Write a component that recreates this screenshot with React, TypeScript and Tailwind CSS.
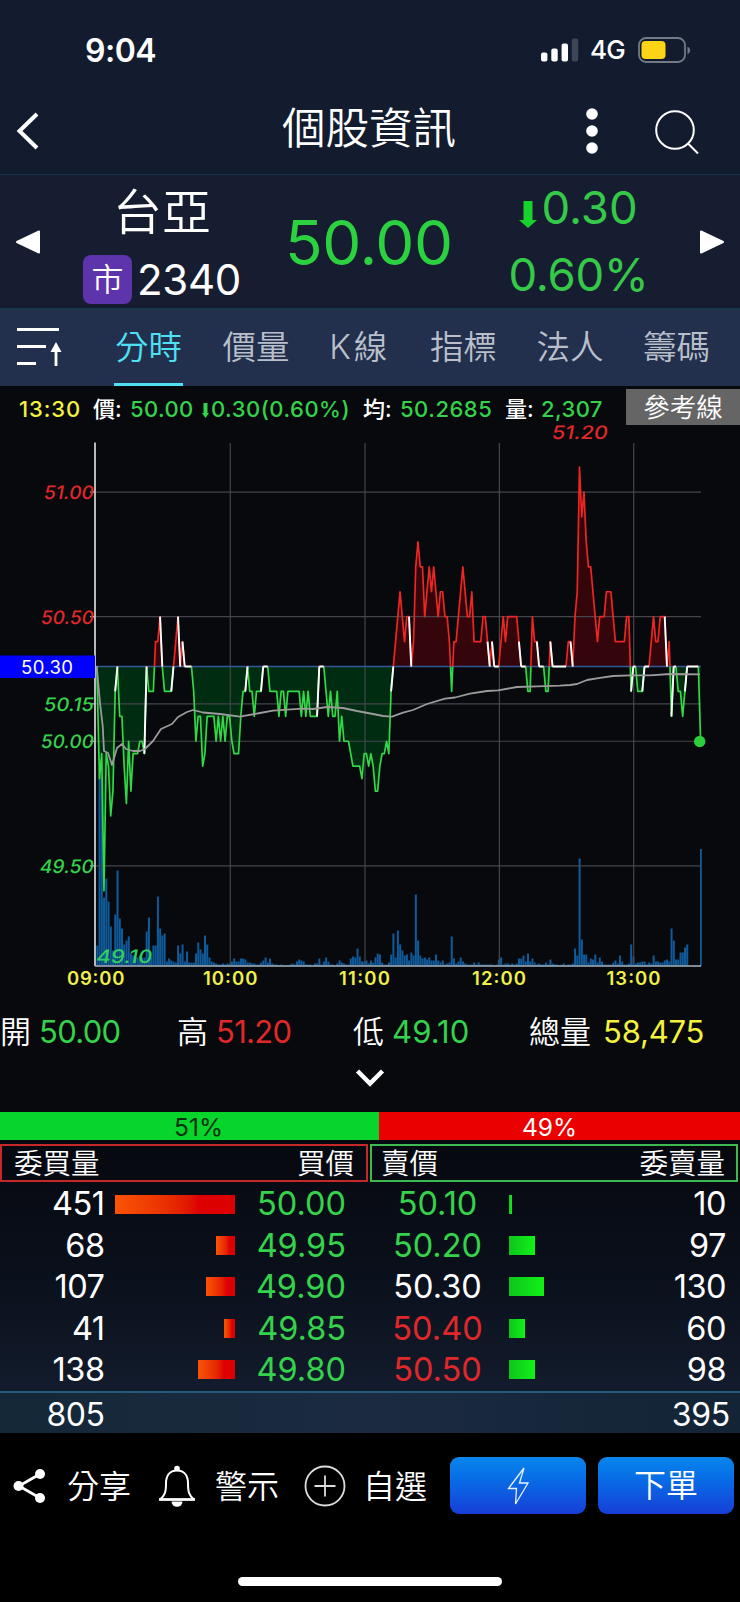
import type { ReactNode } from 'react';
import { clsx } from 'clsx';

const REF = 50.3;

// [minute since 09:00, price], only where the line bends
const PRICES: [number, number][] = [
  [0.8, 50.3], [2, 49.85], [3, 49.95], [4, 49.4], [5, 49.95], [6, 49.9], [7, 49.7], [8, 49.8], [9, 50.2], [10, 50.3],
  [11, 50.1], [12, 50.1], [13, 49.9], [14, 49.75], [15, 50], [16, 49.8], [17, 49.95], [19, 49.95], [20, 50], [21, 50],
  [22, 49.95], [23, 50.3], [24, 50.2], [26, 50.2], [27, 50.4], [28, 50.4], [29, 50.5], [30, 50.3], [31, 50.2], [34, 50.2],
  [35, 50.3], [36, 50.4], [37, 50.5], [38, 50.3], [39, 50.4], [40, 50.3], [43, 50.3], [44, 50.2], [45, 50], [46, 50.1],
  [47, 50.1], [48, 49.9], [49, 49.95], [50, 50.1], [53, 50.1], [54, 50], [55, 50.1], [56, 50], [57, 50.1], [58, 50],
  [59, 50.1], [60, 50.1], [61, 50], [62, 49.95], [64, 49.95], [65, 50.1], [66, 50.2], [67, 50.2], [68, 50.3], [69, 50.2],
  [70, 50.2], [71, 50.1], [72, 50.2], [74, 50.2], [75, 50.3], [77, 50.3], [78, 50.2], [81, 50.2], [82, 50.1], [83, 50.2],
  [84, 50.2], [85, 50.1], [86, 50.2], [91, 50.2], [92, 50.1], [93, 50.2], [94, 50.1], [95, 50.2], [96, 50.1], [99, 50.1],
  [100, 50.3], [102, 50.3], [103, 50.2], [104, 50.1], [105, 50.2], [106, 50.1], [107, 50.1], [108, 50.2], [109, 50], [110, 50.1],
  [111, 50], [113, 50], [114, 49.95], [115, 49.9], [118, 49.9], [119, 49.85], [120, 49.95], [121, 49.95], [122, 49.9], [123, 49.95],
  [124, 49.9], [125, 49.8], [126, 49.8], [127, 49.9], [128, 49.95], [129, 49.95], [130, 50], [131, 49.95], [132, 50.2], [133, 50.3],
  [134, 50.4], [135, 50.5], [136, 50.6], [137, 50.5], [138, 50.4], [139, 50.5], [140, 50.5], [141, 50.3], [142, 50.4], [143, 50.7],
  [144, 50.8], [145, 50.7], [146, 50.7], [147, 50.5], [148, 50.6], [149, 50.7], [150, 50.6], [151, 50.7], [152, 50.6], [153, 50.5],
  [154, 50.6], [155, 50.6], [156, 50.5], [157, 50.5], [158, 50.4], [159, 50.2], [160, 50.4], [161, 50.4], [162, 50.5], [163, 50.6],
  [164, 50.7], [165, 50.6], [166, 50.5], [167, 50.5], [168, 50.6], [169, 50.4], [172, 50.4], [173, 50.5], [174, 50.5], [175, 50.4],
  [176, 50.3], [177, 50.4], [178, 50.3], [180, 50.3], [181, 50.4], [182, 50.5], [183, 50.4], [184, 50.5], [188, 50.5], [189, 50.4],
  [190, 50.3], [192, 50.3], [193, 50.2], [194, 50.2], [195, 50.5], [196, 50.4], [197, 50.4], [198, 50.3], [200, 50.3], [201, 50.2],
  [202, 50.2], [203, 50.4], [204, 50.3], [210, 50.3], [211, 50.4], [212, 50.4], [213, 50.3], [214, 50.5], [215, 50.6], [216, 51.1],
  [217, 50.9], [218, 51], [219, 50.8], [220, 50.7], [221, 50.7], [222, 50.6], [223, 50.5], [224, 50.4], [225, 50.5], [227, 50.5],
  [228, 50.6], [230, 50.6], [231, 50.5], [232, 50.4], [236, 50.4], [237, 50.5], [238, 50.5], [239, 50.2], [240, 50.3], [241, 50.3],
  [242, 50.2], [244, 50.2], [245, 50.3], [247, 50.3], [248, 50.4], [249, 50.5], [250, 50.4], [251, 50.4], [252, 50.5], [254, 50.5],
  [255, 50.3], [256, 50.4], [257, 50.1], [258, 50.3], [259, 50.3], [260, 50.2], [261, 50.2], [262, 50.1], [263, 50.2], [264, 50.3],
  [269, 50.3], [270, 50],
];

const AVERAGE =
  '96.7,236 100,273 102.7,296 104,321 108,323 112,335 117,318 122,314 126,319 133,321 140,321 145,319 153,311 161,299 172,294 178,287 187,282 193,280 203,282.5 220,284 240,286.7 260,283 273,280.7 287,279.7 303,278.7 313,279 327,277 343,278 357,281 373,284 383,286 392,286.7 403,282.7 413,280 427,274 445,268.6 455,267.5 470,263.6 487,261 498,260.4 517,257 537,256.4 560,255.7 570,255 577,254 587,250 600,247.9 613,246 630,245.4 650,245.4 670,244 700,244.3';

// one bar height per minute
const VOLUMES = [
  0, 20, 193, 190, 68, 87, 64, 39, 15, 51, 95, 47, 37, 21, 25, 29, 12, 10, 8, 8, 10, 8, 8, 34, 48, 8, 20, 20, 69, 37,
  30, 32, 4, 7, 5, 4, 3, 20, 12, 21, 4, 14, 3, 3, 3, 12, 23, 16, 12, 30, 21, 8, 4, 3, 2, 1, 1, 2, 1, 2,
  2, 4, 7, 4, 4, 7, 7, 6, 3, 3, 2, 2, 1, 1, 3, 5, 8, 3, 7, 2, 1, 1, 0, 1, 0, 0, 0, 1, 2, 1,
  4, 6, 5, 4, 1, 1, 1, 0, 2, 2, 7, 1, 4, 8, 4, 1, 1, 0, 2, 5, 3, 2, 1, 1, 7, 9, 8, 17, 9, 4,
  4, 5, 2, 5, 3, 8, 12, 11, 3, 1, 1, 3, 11, 32, 8, 35, 21, 15, 10, 11, 5, 13, 10, 71, 25, 10, 7, 8, 6, 8,
  5, 5, 11, 5, 3, 5, 1, 2, 3, 29, 7, 2, 4, 8, 4, 2, 1, 1, 1, 3, 1, 3, 1, 1, 1, 1, 1, 1, 0, 1,
  6, 8, 1, 2, 2, 1, 2, 1, 2, 7, 7, 10, 4, 12, 4, 7, 3, 1, 2, 1, 1, 3, 1, 6, 2, 1, 1, 0, 1, 2,
  0, 1, 1, 2, 17, 10, 107, 26, 11, 11, 3, 7, 6, 11, 3, 8, 4, 1, 1, 1, 1, 3, 5, 2, 10, 4, 1, 1, 2, 21,
  9, 2, 3, 3, 4, 4, 1, 3, 2, 10, 4, 4, 3, 3, 5, 6, 4, 37, 25, 6, 6, 13, 13, 18, 21, 0, 0, 0, 0, 0,
];

const px = (minute: number) => 95 + minute * 2.243;
const py = (price: number) => 236.5 + (REF - price) * 249.2;

const line = PRICES.map(([m, p]) => `${px(m)},${py(p)}`).join(' ');
const area = `${px(0.8)},${py(REF)} ${line} ${px(270)},${py(REF)}`;
const flats = PRICES.slice(1)
  .map((point, i) => [PRICES[i], point])
  .filter(([, to]) => to[1] === REF);

const AXIS = [
  { label: '51.00', price: 51, x: 43, color: '#e0282a' },
  { label: '50.50', price: 50.5, x: 40, color: '#e0282a' },
  { label: '50.15', price: 50.15, x: 43, color: '#35d24b' },
  { label: '50.00', price: 50, x: 40, color: '#35d24b' },
  { label: '49.50', price: 49.5, x: 39, color: '#35d24b' },
];

const HOURS = [
  { label: '09:00', x: 67, width: 57.5 },
  { label: '10:00', x: 203, width: 54.5 },
  { label: '11:00', x: 339, width: 51 },
  { label: '12:00', x: 472, width: 54 },
  { label: '13:00', x: 606.5, width: 54 },
];

function SlantedLabel({ x, y, width, color, children }: { x: number; y: number; width: number; color: string; children: string }) {
  return (
    <text
      transform={`translate(${x} ${y}) skewX(-10)`}
      fill={color}
      fontSize="18.5"
      fontWeight="500"
      textLength={width}
      lengthAdjust="spacingAndGlyphs"
    >
      {children}
    </text>
  );
}

function Chart() {
  return (
    <svg className="block h-[566px] w-full overflow-visible" viewBox="0 0 740 566" fontFamily="Inter, sans-serif">
      <defs>
        <clipPath id="above"><rect x="0" y="0" width="740" height="236.5" /></clipPath>
        <clipPath id="below"><rect x="0" y="236.5" width="740" height="300" /></clipPath>
      </defs>

      {/* Volume */}
      {VOLUMES.map((v, i) => (
        <rect key={i} x={px(i) - 0.9} y={535.5 - v} width="2" height={v} fill="#0f5b9b" />
      ))}
      <rect x="700" y="419" width="1.8" height="117" fill="#125b97" />

      {/* Areas */}
      <polygon points={area} fill="#002c12" clipPath="url(#below)" />
      <polygon points={area} fill="#34050a" clipPath="url(#above)" />

      {/* Grid */}
      <g stroke="#44464b" strokeWidth="1.2">
        {AXIS.map((a) => <line key={a.label} x1="95" x2="701" y1={py(a.price)} y2={py(a.price)} />)}
        {[230.3, 365, 499.4, 633.7].map((x) => <line key={x} x1={x} x2={x} y1="13" y2="535" />)}
      </g>
      <line x1="95" x2="701" y1="236.5" y2="236.5" stroke="#35589a" strokeWidth="1.4" />

      {/* Price */}
      <g fill="none" strokeWidth="1.7" strokeLinejoin="round">
        <polyline points={line} stroke="#32d845" clipPath="url(#below)" />
        <polyline points={line} stroke="#ee2522" clipPath="url(#above)" />
        {flats.map(([a, b]) => (
          <line key={a[0]} x1={px(a[0])} y1={py(a[1])} x2={px(b[0])} y2={py(b[1])} stroke="#fff" strokeWidth="1.9" />
        ))}
        <polyline points={AVERAGE} stroke="#9b9b9b" strokeWidth="1.8" />
      </g>
      <circle cx="699.7" cy="311.5" r="5.7" fill="#2bcf3c" />

      {/* Axes */}
      <line x1="95" x2="95" y1="12.5" y2="536" stroke="#b8b8b8" strokeWidth="2" />
      <line x1="95" x2="701" y1="536" y2="536" stroke="#a9b4bf" strokeWidth="1.3" />
      {AXIS.map((a) => (
        <line key={a.label} x1="90" x2="95" y1={py(a.price)} y2={py(a.price)} stroke="#c8c8c8" strokeWidth="1.2" />
      ))}

      {AXIS.map((a) => (
        <SlantedLabel key={a.label} x={a.x} y={py(a.price) + 7.2} width={93 - a.x} color={a.color}>{a.label}</SlantedLabel>
      ))}
      <SlantedLabel x={551} y={9} width={56} color="#e0282a">51.20</SlantedLabel>
      <SlantedLabel x={95.5} y={533} width={56} color="#2fd05f">49.10</SlantedLabel>

      <rect x="0" y="225.5" width="95" height="22.5" fill="#0000ff" />
      <text x="21" y="243.800" fill="#fff" fontSize="18.5" textLength="52" lengthAdjust="spacing">50.30</text>
      {HOURS.map((h) => (
        <text key={h.label} x={h.x} y="554.500" fill="#f0f04a" fontSize="18.500" fontWeight="600" textLength={h.width} lengthAdjust="spacing">
          {h.label}
        </text>
      ))}
    </svg>
  );
}

function StatusBar() {
  return (
    <div className="flex h-[88px] items-center justify-between pt-[13px] pr-[49px] pl-[85px]">
      <span className="text-[32px] font-semibold tracking-[-0.5px]">9:04</span>
      <div className="-mt-px flex items-center">
        <svg className="h-6 w-[38px]" viewBox="0 0 38 24" fill="#fff">
          <rect x="0" y="14.500" width="6.400" height="9" rx="2" />
          <rect x="10.300" y="10.500" width="6.400" height="13" rx="2" />
          <rect x="20.600" y="5.500" width="6.400" height="18" rx="2" />
          <rect x="30.800" y="0.500" width="6.400" height="23" rx="2" fill="#3d4657" />
        </svg>
        <span className="ml-[11px] w-[37px] text-[26px] font-medium tracking-[-0.8px]">4G</span>
        <svg className="ml-[11px] h-[26px] w-[53px]" viewBox="0 0 53 26">
          <rect x="1" y="1" width="46" height="24" rx="7" fill="none" stroke="#727987" strokeWidth="1.8" />
          <rect x="3.500" y="4" width="24" height="18" rx="4" fill="#ffd316" />
          <path d="M49.500 9.500a4 4 0 0 1 0 7.500z" fill="#727987" />
        </svg>
      </div>
    </div>
  );
}

function Header() {
  return (
    <div className="flex h-[87px] items-center border-b border-[#123247]">
      <svg className="ml-[15px] h-10 w-[26px]" viewBox="0 0 26 40" fill="none" stroke="#fff" strokeWidth="4">
        <path d="M22 3 4.500 20l17.500 17" />
      </svg>
      <h1 className="ml-[241px] -mt-[5px] w-[178px] text-[43.500px] font-[350] whitespace-nowrap">個股資訊</h1>
      <svg className="ml-[126px] h-12 w-3" viewBox="0 0 12 48" fill="#fff">
        <circle cx="6" cy="7" r="5.800" />
        <circle cx="6" cy="24" r="5.800" />
        <circle cx="6" cy="41" r="5.800" />
      </svg>
      <svg className="ml-[55px] h-12 w-12" viewBox="0 0 48 48" fill="none" stroke="#fff" strokeWidth="2">
        <circle cx="22" cy="23" r="18.800" />
        <path d="m35 36.500 10 10" />
      </svg>
    </div>
  );
}

function Quote() {
  return (
    <div className="flex h-[133px] items-center bg-[#171d31]">
      <svg className="ml-[15px] h-6 w-[26px]" viewBox="0 0 26 24">
        <path d="M24 1.500v21L2 12z" fill="#fff" stroke="#fff" strokeWidth="2" strokeLinejoin="round" />
      </svg>
      <div className="ml-[42px] flex w-[162px] flex-col items-center">
        <span className="mr-1 h-[72px] text-[49px] leading-[75px] font-[350]">台亞</span>
        <div className="flex h-[61px] items-center self-start pt-[3px]">
          <span className="flex h-[49px] w-[49px] items-center justify-center rounded-lg bg-[#5d34ab] pt-0.5 text-[32px] font-[350]">市</span>
          <span className="mt-0.5 ml-[5px] text-[42px] tracking-[-0.3px]">2340</span>
        </div>
      </div>
      <span className="mt-0.5 ml-[40px] w-[172px] text-[62px] tracking-[-0.4px] text-[#2bd13f]">50.00</span>
      <div className="ml-[45px] flex w-[153px] flex-col items-center text-[45.500px] text-[#35c948]">
        <span className="flex h-[67px] items-center">
          <svg className="mt-3 mr-1 h-[27px] w-[18px]" viewBox="0 0 18 27" fill="#15d32c">
            <path d="M4.500 0h9v19H18l-9 8-9-8h4.500z" />
          </svg>
          0.30
        </span>
        <span className="flex h-[67px] items-center tracking-[-0.2px]">0.60%</span>
      </div>
      <svg className="ml-[44px] h-6 w-[26px]" viewBox="0 0 26 24">
        <path d="M2 1.500v21L24 12z" fill="#fff" stroke="#fff" strokeWidth="2" strokeLinejoin="round" />
      </svg>
    </div>
  );
}

const TABS = ['分時', '價量', 'K線', '指標', '法人', '籌碼'];

function Tabs() {
  return (
    <div className="flex h-[78px] items-center border-t-2 border-[#15384f] bg-[#222f4d]">
      <svg className="ml-[16px] h-[42px] w-[48px]" viewBox="0 0 48 42" stroke="#fff" strokeWidth="2.800">
        <path d="M1 2.500h42M1 19.500h29M1 36.500h19M40 18v21" />
        <path d="m40 15-5.500 10h11z" fill="#fff" stroke="none" />
      </svg>
      <div className="ml-[50px] flex h-full w-[596px] justify-between text-[33.500px]">
        {TABS.map((tab, i) => (
          <span
            key={tab}
            className={clsx(
              'flex h-full items-center border-b-[3px] pt-0.5 font-[350] whitespace-nowrap',
              i === 0 ? 'border-[#4fe0f5] px-px text-[#4fe0f5]' : 'border-transparent text-[#b9bfca]',
              tab === 'K線' && 'tracking-[3px]',
            )}
          >
            {tab}
          </span>
        ))}
      </div>
    </div>
  );
}

function Readout() {
  return (
    <div className="flex h-11 items-center pt-px text-[22px] font-medium">
      <span className="ml-[19px] w-[74px] tracking-[0.9px] text-[#f2f23f]">13:30</span>
      <span className="w-[37px]">價:</span>
      <span className="w-[72px] tracking-[0.4px] text-[#35d24b]">50.00</span>
      <svg className="mt-1 h-[15px] w-[7px]" viewBox="0 0 7 15" fill="#35d24b">
        <path d="M1.500 0h4v10H7l-3.500 5L0 10h1.500z" />
      </svg>
      <span className="ml-0.5 w-[152px] tracking-[0.5px] text-[#35d24b]">0.30(0.60%)</span>
      <span className="w-[37px]">均:</span>
      <span className="w-[105px] tracking-[0.5px] text-[#35d24b]">50.2685</span>
      <span className="w-[36px]">量:</span>
      <span className="w-[85px] tracking-[0.4px] text-[#35d24b]">2,307</span>
      <span className="-mt-[3px] flex h-9 flex-1 items-center justify-center bg-[#656565] text-[26.500px] font-[350]">參考線</span>
    </div>
  );
}

function Stat({ label, value, className, color }: { label: string; value: string; className: string; color: string }) {
  return (
    <div className={clsx('flex items-center gap-2 whitespace-nowrap', className)}>
      <span className="font-[350]">{label}</span>
      <span className={color}>{value}</span>
    </div>
  );
}

function Summary() {
  return (
    <div className="h-[116px]">
      <div className="flex h-[71px] items-center text-[31px]">
        <Stat className="w-[177px]" label="開" value="50.00" color="text-[#35d24b] tracking-[-0.7px]" />
        <Stat className="w-[176px]" label="高" value="51.20" color="text-[#e0282a] tracking-[-0.7px]" />
        <Stat className="w-[176px]" label="低" value="49.10" color="text-[#35d24b] tracking-[0.1px]" />
        <Stat className="gap-[12px]" label="總量" value="58,475" color="text-[#f2f23f] tracking-[-0.2px]" />
      </div>
      <svg className="mx-auto mt-px h-5 w-[30px]" viewBox="0 0 30 20" fill="none" stroke="#fff" strokeWidth="4.500">
        <path d="m2.500 3 12.500 12.500L27.500 3" />
      </svg>
    </div>
  );
}

const BIDS = [
  { qty: 451, bar: 120, price: '50.00' },
  { qty: 68, bar: 19, price: '49.95' },
  { qty: 107, bar: 29, price: '49.90' },
  { qty: 41, bar: 11, price: '49.85' },
  { qty: 138, bar: 37, price: '49.80' },
];

const ASKS = [
  { qty: 10, bar: 2.5, price: '50.10', color: 'text-[#35d24b]' },
  { qty: 97, bar: 26, price: '50.20', color: 'text-[#35d24b]' },
  { qty: 130, bar: 35, price: '50.30', color: 'text-white' },
  { qty: 60, bar: 15.5, price: '50.40', color: 'text-[#e0282a]' },
  { qty: 98, bar: 26, price: '50.50', color: 'text-[#e0282a]' },
];

function OrderBook() {
  return (
    <div className="h-[321px] bg-linear-to-b from-[#06070d] via-[#0a101b] to-[#162033]">
      <div className="flex h-7 items-center text-[24.500px]">
        <div className="flex h-full w-[379px] items-center justify-center bg-[#07d52b] pt-[3px] pl-[18px] text-[#04310b]">51%</div>
        <div className="flex h-full flex-1 items-center justify-center bg-[#eb0000] pt-[3px] pr-[20px]">49%</div>
      </div>

      <div className="mt-[4px] flex h-[38px] gap-[2px] text-[28.500px] font-[350]">
        <div className="flex w-[368px] items-center justify-between border-2 border-[#c62727] px-[12px] pt-0.5">
          <span>委買量</span>
          <span>買價</span>
        </div>
        <div className="flex w-[368px] items-center justify-between border-2 border-[#3fb850] pt-0.5 pr-[11px] pl-[9px]">
          <span>賣價</span>
          <span>委賣量</span>
        </div>
      </div>

      <div className="flex h-[209px] pt-[2px] text-[32.500px]">
        <div className="w-[370px]">
          {BIDS.map((b) => (
            <div key={b.price} className="flex h-[41.4px] items-center">
              <span className="w-[104.500px] text-right tracking-[-0.5px]">{b.qty}</span>
              <div className="-mt-px flex w-[130px] justify-end">
                <div className="h-[19px] bg-linear-to-r from-[#fb5306] to-[#dc0000] to-70%" style={{ width: b.bar }} />
              </div>
              <span className="w-[111.500px] text-right text-[#35d24b]">{b.price}</span>
            </div>
          ))}
        </div>
        <div className="flex-1">
          {ASKS.map((a) => (
            <div key={a.price} className="flex h-[41.4px] items-center">
              <span className={clsx('w-[135px] text-center', a.color)}>{a.price}</span>
              <div className="-mt-px ml-[4px] w-[130px]">
                <div className="h-[19px] bg-linear-to-r from-[#0fc41c] to-[#10f215]" style={{ width: a.bar }} />
              </div>
              <span className="w-[87px] text-right tracking-[-0.5px]">{a.qty}</span>
            </div>
          ))}
        </div>
      </div>

      <div className="flex h-[42px] items-center justify-between border-t-2 border-[#235b7c] bg-linear-to-r from-[#142838] via-[#1b2a40] to-[#132436] pt-1 pr-[10px] text-[32px]">
        <span className="w-[104.500px] text-right tracking-[-0.5px]">805</span>
        <span className="tracking-[-0.3px]">395</span>
      </div>
    </div>
  );
}

function Action({ icon, label, className }: { icon: ReactNode; label: string; className: string }) {
  return (
    <button type="button" className={clsx('flex items-center whitespace-nowrap', className)}>
      {icon}
      <span className="pt-0.5">{label}</span>
    </button>
  );
}

function BottomBar() {
  return (
    <div className="flex h-[169px] flex-col items-center bg-black">
      <div className="mt-6 flex h-[57px] w-full items-center text-[32px] font-[350]">
        <Action
          className="ml-[13px] w-[144px] gap-[22px]"
          label="分享"
          icon={
            <svg className="h-9 w-8" viewBox="0 0 32 36" fill="#fff">
              <path d="M27 6 6 18l21 12" fill="none" stroke="#fff" strokeWidth="2.800" />
              <circle cx="27" cy="6" r="5" />
              <circle cx="5.500" cy="18" r="5" />
              <circle cx="27" cy="30" r="5" />
            </svg>
          }
        />
        <Action
          className="w-[147px] gap-[18px]"
          label="警示"
          icon={
            <svg className="h-[42px] w-10" viewBox="0 0 40 42" fill="none" stroke="#fff" strokeWidth="2">
              <path d="M3 34.500c5-4 6-7.500 6-16 0-7 3-13 11-13s11 6 11 13c0 8.500 1 12 6 16z" strokeLinejoin="round" />
              <path d="M2 34.500h36" strokeWidth="2.500" />
              <circle cx="20" cy="3.500" r="2.800" fill="#fff" stroke="none" />
              <path d="M14.500 36.500h11a5.500 5.200 0 0 1-11 0z" fill="#fff" stroke="none" />
            </svg>
          }
        />
        <Action
          className="w-[146px] gap-[17px]"
          label="自選"
          icon={
            <svg className="h-[42px] w-[42px]" viewBox="0 0 42 42" fill="none" stroke="#ddd" strokeWidth="1.800">
              <circle cx="21" cy="21" r="19.500" />
              <path d="M21 10.500v21M10.500 21h21" />
            </svg>
          }
        />
        <button type="button" className="flex h-[57px] w-[136px] items-center justify-center rounded-[9px] bg-linear-to-b from-[#0a86ed] to-[#173dd8]">
          <svg className="h-[38px] w-[22px]" viewBox="0 0 22 38" fill="none" stroke="#e8f1ff" strokeWidth="1.300">
            <path d="M17 1 1.500 21.500h8L8.500 37 21 16h-8.500z" />
          </svg>
        </button>
        <button type="button" className="ml-3 flex h-[57px] w-[136px] items-center justify-center rounded-[9px] bg-linear-to-b from-[#0a86ed] to-[#173dd8]">
          下單
        </button>
      </div>
      <div className="mt-[63px] h-[9px] w-[264px] rounded-full bg-white" />
    </div>
  );
}

export default function App() {
  return (
    <div className="h-[1602px] w-[740px] overflow-hidden bg-[#07090d] font-['Inter','Noto_Sans_CJK_TC',sans-serif] leading-none text-white">
      <div className="bg-[#131c2f]">
        <StatusBar />
        <Header />
      </div>
      <Quote />
      <Tabs />
      <Readout />
      <Chart />
      <Summary />
      <OrderBook />
      <BottomBar />
    </div>
  );
}
